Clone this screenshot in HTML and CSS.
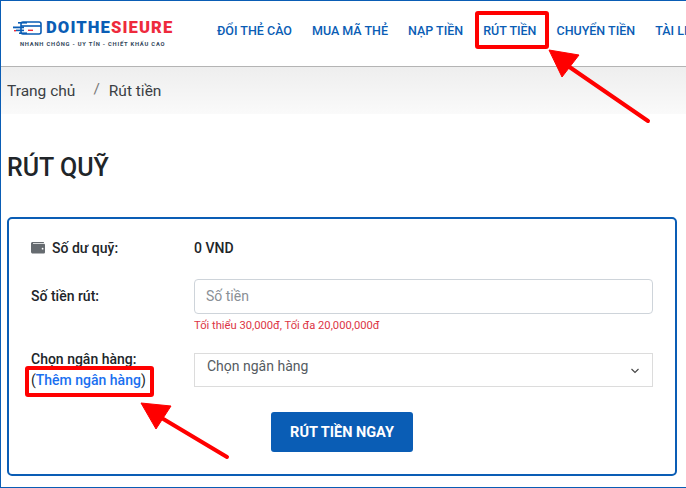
FILE: index.html
```
<!DOCTYPE html>
<html lang="vi">
<head>
<meta charset="utf-8">
<title>Rút tiền</title>
<link rel="stylesheet" href="styles.css">
</head>
<body>
<div class="frame">
  <header class="header">
    <div class="logo">
      <div class="logo-top">
        <svg class="logo-icon" width="29" height="14" viewBox="0 0 29 14">
          <rect x="8" y="1" width="20" height="12" rx="2" fill="none" stroke="#0a5db5" stroke-width="1.6"/>
          <rect x="8" y="4.2" width="20" height="1.6" fill="#0a5db5"/>
          <rect x="5" y="1" width="9" height="1.6" fill="#0a5db5"/>
          <rect x="0" y="5.5" width="11" height="1.8" fill="#0a5db5"/>
          <rect x="3" y="8.6" width="8" height="1.6" fill="#0a5db5"/>
          <rect x="6" y="11.4" width="8" height="1.6" fill="#0a5db5"/>
          <rect x="15" y="8.6" width="5" height="1.4" fill="#ee2a3c"/>
          <rect x="1" y="9" width="2" height="1.4" fill="#ee2a3c"/>
        </svg>
        <span class="logo-name"><span class="logo-blue">DOITHE</span><span class="logo-red">SIEURE</span></span>
      </div>
      <div class="logo-tag">NHANH CHÓNG - UY TÍN - CHIẾT KHẤU CAO</div>
    </div>
    <nav class="nav">
      <a class="nav-link">ĐỔI THẺ CÀO</a>
      <a class="nav-link">MUA MÃ THẺ</a>
      <a class="nav-link">NẠP TIỀN</a>
      <a class="nav-link">RÚT TIỀN</a>
      <a class="nav-link">CHUYỂN TIỀN</a>
      <a class="nav-link">TÀI LIỆU</a>
    </nav>
  </header>
  <div class="crumbs">
    <span>Trang chủ</span>
    <span class="crumb-sep">/</span>
    <span>Rút tiền</span>
  </div>
  <main class="main">
    <h1 class="title">RÚT QUỸ</h1>
    <section class="card">
      <div class="row row-balance">
        <div class="label label-balance">
          <svg class="wallet" width="14" height="13" viewBox="0 0 14 12">
            <path d="M1.6 0.5H12.2C12.9 0.5 13 1 13 1.6H2V2.2H12.6C13.5 2.2 14 2.7 14 3.4V10.4C14 11.3 13.4 12 12.5 12H1.8C0.8 12 0 11.2 0 10.2V2C0 1.1 0.7 0.5 1.6 0.5Z" fill="#666b70"/>
            <circle cx="11.6" cy="7.2" r="0.9" fill="#fff"/>
          </svg>
          <span>Số dư quỹ:</span>
        </div>
        <div class="value">0 VND</div>
      </div>
      <div class="row row-amount">
        <div class="label label-amount">Số tiền rút:</div>
        <div class="field">
          <input class="input" type="text" placeholder="Số tiền">
          <div class="hint">Tối thiểu 30,000đ, Tối đa 20,000,000đ</div>
        </div>
      </div>
      <div class="row row-bank">
        <div class="label label-bank">
          <div>Chọn ngân hàng:</div>
          <div class="add-line">(<a class="add-link">Thêm ngân hàng</a>)</div>
        </div>
        <div class="select">
          <span>Chọn ngân hàng</span>
          <svg width="10" height="6" viewBox="0 0 10 6"><path d="M1.5 1L5 4.5L8.5 1" fill="none" stroke="#444" stroke-width="1.1"/></svg>
        </div>
      </div>
      <div class="actions"><button class="submit" type="button">RÚT TIỀN NGAY</button></div>
    </section>
  </main>
  <div class="mark mark-nav"></div>
  <div class="mark mark-add"></div>
  <svg class="arrows" width="686" height="488" viewBox="0 0 686 488">
    <path d="M648 121L568 66" stroke="#f00" stroke-width="4" stroke-linecap="round"/>
    <path d="M549 50L579 55L562 77Z" fill="#f00" stroke="#f00" stroke-linejoin="round"/>
    <path d="M227 457L160 417" stroke="#f00" stroke-width="4" stroke-linecap="round"/>
    <path d="M141 403L171 406L156 429Z" fill="#f00" stroke="#f00" stroke-linejoin="round"/>
  </svg>
</div>
</body>
</html>
```
FILE: styles.css
```
* { box-sizing: border-box; }
html, body { margin: 0; padding: 0; }
body { font-family: Roboto, "Liberation Sans", sans-serif; color: #212529; background: #fff; }
.frame { position: relative; width: 686px; height: 488px; overflow: hidden; border: 1px solid #0a5db5; border-right: 0; background: #fff; }
.header { display: flex; align-items: center; height: 66px; border-bottom: 1px solid #b4b4b4; padding-left: 12px; white-space: nowrap; }
.logo { width: 204px; flex: none; padding-top: 0; }
.logo-top { display: flex; align-items: center; gap: 4px; height: 18px; }
.logo-name { font-family: Roboto, sans-serif; font-weight: 900; font-size: 16.6px; letter-spacing: 1.1px; line-height: 18px; }
.logo-blue { color: #0a5db5; }
.logo-red { color: #ee2a3c; }
.logo-tag { font-size: 5.8px; font-weight: 700; letter-spacing: 0.78px; color: #33475b; margin: 4px 0 0 7px; line-height: 7px; }
.nav { display: flex; gap: 20px; margin-bottom: 7px; }
.nav-link { font-size: 12.5px; font-weight: 500; color: #0a5db5; flex: none; }
.crumbs { display: flex; align-items: center; height: 47px; padding: 0 6px 0; font-size: 15.5px; color: #3b3f44; background: linear-gradient(#eeeeee, #fafafa); }
.crumb-sep { margin: 0 9px 0 18px; color: #777; position: relative; top: -2px; }
.main { padding: 0 6px; }
.title { font-size: 25px; font-weight: 500; color: #212529; margin: 0; padding-top: 39px; height: 103px; line-height: 30px; }
.card { width: 670px; height: 259px; border: 2px solid #0a5db5; border-radius: 5px; padding: 0 22px 0 22px; }
.row { display: flex; }
.label { width: 163px; flex: none; font-size: 14px; font-weight: 500; color: #212529; }
.row-balance { align-items: center; padding-top: 17px; height: 40px; }
.label-balance { display: flex; align-items: center; gap: 7px; line-height: 18px; }
.value { font-size: 14px; font-weight: 500; }
.row-amount { margin-top: 20px; }
.label-amount { padding-top: 8px; padding-bottom: 1px; line-height: 18px; }
.field { width: 459px; }
.input { display: block; width: 100%; height: 35px; border: 1px solid #ced4da; border-radius: 4px; padding: 0 10px 2px 11px; font: 14px Roboto, sans-serif; color: #495057; outline: 0; background: #fff; }
.input::placeholder { color: #8a9096; opacity: 1; }
.hint { font-size: 11.2px; line-height: 13px; margin-top: 5px; color: #dc3545; }
.row-bank { margin-top: 17px; }
.label-bank { line-height: 21px; padding-top: 0; }
.add-line { font-weight: 400; }
.add-link { color: #1a6ff0; font-weight: 500; }
.select { width: 459px; height: 34px; margin-top: 4px; border: 1px solid #dcdcdc; display: flex; align-items: center; justify-content: space-between; padding: 0 12px 8px 12px; font-size: 14px; color: #555b61; }
.select svg { margin-top: 9px; }
.actions { display: flex; justify-content: center; margin-top: 21px; }
.submit { width: 142px; height: 40px; border: 0; border-radius: 3px; background: #0a5db5; color: #fff; font: 700 14.5px Roboto, sans-serif; }
.mark { position: absolute; border: 4px solid #f00; border-radius: 3px; }
.mark-nav { left: 474px; top: 10px; width: 74px; height: 38px; }
.mark-add { left: 24px; top: 365px; width: 129px; height: 31px; }
.arrows { position: absolute; left: -1px; top: -1px; pointer-events: none; }
```
